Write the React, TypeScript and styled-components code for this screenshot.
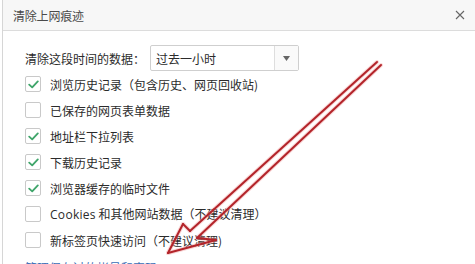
import React from 'react';
import styled, { createGlobalStyle } from 'styled-components';

// ─── Global ───────────────────────────────────────────────────────────────────

const GlobalStyle = createGlobalStyle`
  html, body {
    margin: 0;
    padding: 0;
    background: #fff;
  }
  body {
    font-family: "Noto Sans CJK SC", "Noto Sans", "Liberation Sans", sans-serif;
    color: #2b2b2b;
  }
`;

// ─── Styled ───────────────────────────────────────────────────────────────────

const Page = styled.div`
  position: relative;
  width: 475px;
  height: 264px;
  overflow: hidden;
  background: #fff;
  padding-left: 2px;
  box-sizing: border-box;
`;

const Dialog = styled.div`
  height: 100%;
  border-left: 1px solid #d6d6d6;
  display: flex;
  flex-direction: column;
`;

const Header = styled.div`
  height: 30px;
  flex-shrink: 0;
  display: flex;
  align-items: center;
  justify-content: space-between;
  padding: 0 8px 0 10px;
  background: #f7f7f7;
  border-bottom: 1px solid #dcdcdc;
`;

const Title = styled.span`
  font-size: 12px;
  color: #4a4a4a;
  letter-spacing: -0.2px;
`;

const Close = styled.button`
  width: 14px;
  height: 14px;
  padding: 0;
  border: 0;
  background: none;
  display: flex;
  align-items: center;
  justify-content: center;
`;

const Body = styled.div`
  padding: 14px 0 0 22px;
  display: flex;
  flex-direction: column;
`;

const RangeRow = styled.div`
  height: 26px;
  display: flex;
  align-items: center;
  gap: 8px;
`;

const Label = styled.span`
  font-size: 12px;
  width: 117px;
  white-space: nowrap;
`;

const Select = styled.div`
  width: 147px;
  height: 24px;
  border: 1px solid #cfcfcf;
  border-radius: 2px;
  display: flex;
  align-items: stretch;
  background: #fff;
`;

const SelectValue = styled.span`
  flex: 1;
  display: flex;
  align-items: center;
  padding-left: 5px;
  font-size: 12px;
`;

const SelectArrow = styled.span`
  width: 23px;
  border-left: 1px solid #dedede;
  display: flex;
  align-items: center;
  justify-content: center;
  background: #fafafa;
`;

const Options = styled.div`
  display: flex;
  flex-direction: column;
`;

const Row = styled.label`
  height: 26px;
  display: flex;
  align-items: center;
  gap: 9px;
  font-size: 12px;
  white-space: nowrap;
`;

const Box = styled.span`
  width: 14px;
  height: 14px;
  border: 1px solid #c9c9c9;
  border-radius: 2px;
  background: #fff;
  display: flex;
  align-items: center;
  justify-content: center;
  flex-shrink: 0;
`;

const Latin = styled.span`
  font-family: "Open Sans", "Noto Sans", sans-serif;
  letter-spacing: 0.3px;
`;

const Link = styled.a`
  height: 26px;
  display: flex;
  align-items: center;
  font-size: 12px;
  color: #3a6db5;
  text-decoration: none;
  margin-top: 1px;
`;

const Overlay = styled.svg`
  position: absolute;
  inset: 0;
  pointer-events: none;
`;

// ─── Component ────────────────────────────────────────────────────────────────

const OPTIONS: { text: React.ReactNode; checked: boolean }[] = [
  { text: '浏览历史记录（包含历史、网页回收站)', checked: true },
  { text: '已保存的网页表单数据', checked: false },
  { text: '地址栏下拉列表', checked: true },
  { text: '下载历史记录', checked: true },
  { text: '浏览器缓存的临时文件', checked: true },
  { text: <><Latin>Cookies</Latin> 和其他网站数据（不建议清理）</>, checked: false },
  { text: '新标签页快速访问（不建议清理)', checked: false },
];

const Check = () => (
  <svg width="11" height="9" viewBox="0 0 11 9">
    <path d="M1.2 4.6 L4.2 7.4 L9.8 1.4" fill="none" stroke="#3fa56a" strokeWidth="1.8" strokeLinecap="round" strokeLinejoin="round" />
  </svg>
);

// hand-drawn annotation arrow: double-line shaft, open head
const ARROW = [
  'M377 62 L190 231',
  'M381 65 L197 238',
  'M168 253 L183 224',
  'M168 253 L216 240',
  'M183 224 L190 231',
  'M216 240 L197 238',
];

export default function App() {
  return (
    <>
      <GlobalStyle />
      <Page>
        <Dialog>
          <Header>
            <Title>清除上网痕迹</Title>
            <Close aria-label="关闭">
              <svg width="10" height="10" viewBox="0 0 10 10">
                <path d="M1 1 L9 9 M9 1 L1 9" stroke="#666" strokeWidth="1.1" />
              </svg>
            </Close>
          </Header>
          <Body>
            <RangeRow>
              <Label>清除这段时间的数据：</Label>
              <Select>
                <SelectValue>过去一小时</SelectValue>
                <SelectArrow>
                  <svg width="7" height="5" viewBox="0 0 7 5">
                    <path d="M0 0 L7 0 L3.5 5 Z" fill="#666" />
                  </svg>
                </SelectArrow>
              </Select>
            </RangeRow>
            <Options>
              {OPTIONS.map((o, i) => (
                <Row key={i}>
                  <Box>{o.checked && <Check />}</Box>
                  <span>{o.text}</span>
                </Row>
              ))}
            </Options>
            <Link href="#">管理保存过的帐号和密码</Link>
          </Body>
        </Dialog>
        <Overlay width="475" height="264" viewBox="0 0 475 264">
          <g fill="none" stroke="#f3a3a3" strokeWidth="4" strokeLinecap="round" strokeLinejoin="round" opacity="0.45">
            {ARROW.map((d) => <path key={d} d={d} />)}
          </g>
          <g fill="none" stroke="#b3242a" strokeWidth="2" strokeLinecap="round" strokeLinejoin="round">
            {ARROW.map((d) => <path key={d} d={d} />)}
          </g>
        </Overlay>
      </Page>
    </>
  );
}
